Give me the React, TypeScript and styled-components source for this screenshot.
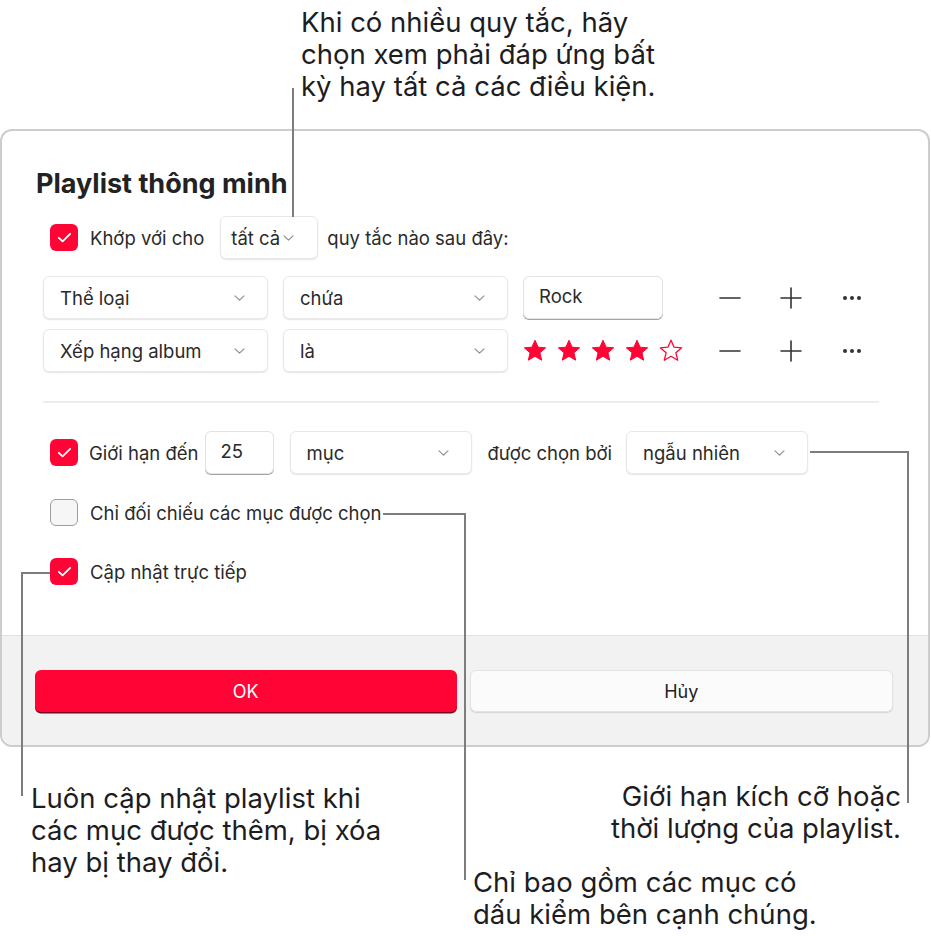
import React from 'react';
import styled, { createGlobalStyle } from 'styled-components';

const GlobalStyle = createGlobalStyle`
  html, body {
    margin: 0;
    padding: 0;
    background: #ffffff;
  }
  * {
    box-sizing: border-box;
  }
`;

const RED = '#ff0435';

const Canvas = styled.div`
  position: relative;
  width: 931px;
  height: 936px;
  overflow: hidden;
  font-family: Inter, "Noto Sans", sans-serif;
  color: #222;
`;

const Dialog = styled.div`
  margin-top: 129px;
  width: 930px;
  border: 2px solid #cdcdcd;
  border-radius: 12px;
  overflow: hidden;
  background: #fff;
`;

const Body = styled.div`
  display: flex;
  flex-direction: column;
  padding: 38px 49px 42px 34px;
`;

const Title = styled.h1`
  margin: 0 0 17px;
  font-size: 27px;
  line-height: 30px;
  font-weight: 700;
  color: #222;
`;

const Row = styled.div<{ $indent?: number; $gap?: number; $mb?: number }>`
  display: flex;
  align-items: center;
  height: 43px;
  margin-left: ${p => p.$indent ?? 0}px;
  margin-bottom: ${p => p.$mb ?? 0}px;
  gap: ${p => p.$gap ?? 0}px;
`;

const Label = styled.span<{ $ml?: number }>`
  font-size: 18.5px;
  color: #2a2a2a;
  margin-left: ${p => p.$ml ?? 0}px;
  white-space: nowrap;
`;

const CheckBox = styled.span<{ $on: boolean }>`
  display: inline-flex;
  align-items: center;
  justify-content: center;
  flex: none;
  width: 28px;
  height: 27px;
  border-radius: 6px;
  background: ${p => (p.$on ? RED : '#f6f6f6')};
  border: ${p => (p.$on ? 'none' : '1.5px solid #9d9d9d')};
`;

const Popup = styled.div<{ $w?: number; $compact?: boolean; $ml?: number }>`
  display: flex;
  align-items: center;
  justify-content: ${p => (p.$compact ? 'flex-start' : 'space-between')};
  gap: 3px;
  width: ${p => (p.$w ? `${p.$w}px` : 'auto')};
  height: 43px;
  margin-left: ${p => p.$ml ?? 0}px;
  padding: ${p => (p.$compact ? '0 10px 0 10px' : '0 22px 0 16px')};
  border-radius: 6px;
  background: #fff;
  border: 1px solid #e8e8e8;
  box-shadow: 0 1px 1.5px rgba(0, 0, 0, 0.1);
  font-size: 18.5px;
  color: #2a2a2a;
  white-space: nowrap;
  flex: none;
`;

const Field = styled.div<{ $w: number; $ml?: number }>`
  display: flex;
  align-items: center;
  width: ${p => p.$w}px;
  height: 43px;
  margin-left: ${p => p.$ml ?? 0}px;
  padding: 0 15px 4px;
  border-radius: 6px;
  background: #fff;
  border: 1px solid #e3e3e3;
  box-shadow: 0 1px 0 #a5a5a5;
  font-size: 18.5px;
  color: #2a2a2a;
  flex: none;
`;

const Stars = styled.div`
  display: flex;
  gap: 10px;
  width: 140px;
  flex: none;

  svg {
    flex: none;
  }
`;

const Tools = styled.div`
  display: flex;
  gap: 21px;
  margin-left: 32px;
`;

const ToolButton = styled.span`
  display: inline-flex;
  align-items: center;
  justify-content: center;
  width: 40px;
  height: 40px;
`;

const Separator = styled.div`
  height: 2px;
  background: #ededed;
  margin: 29px 0 28px 7px;
`;

const Footer = styled.div`
  display: flex;
  gap: 13px;
  padding: 34px 35px 33px 33px;
  background: #f2f2f2;
  border-top: 1px solid #e2e2e2;
`;

const Button = styled.button<{ $primary?: boolean }>`
  flex: 1;
  height: 42px;
  border-radius: 6px;
  font-family: Inter, "Noto Sans", sans-serif;
  font-size: 18px;
  cursor: pointer;
  border: ${p => (p.$primary ? 'none' : '1px solid #e3e3e3')};
  background: ${p => (p.$primary ? RED : '#fbfbfb')};
  color: ${p => (p.$primary ? '#fff' : '#222')};
  box-shadow: ${p => (p.$primary ? '0 1.5px 0 #7a0019' : '0 1px 1px rgba(0,0,0,0.12)')};
`;

const Leaders = styled.svg`
  position: absolute;
  left: 0;
  top: 0;
  pointer-events: none;
`;

const Callout = styled.div<{ $x: number; $y: number; $right?: boolean }>`
  position: absolute;
  ${p => (p.$right ? `right: ${931 - p.$x}px;` : `left: ${p.$x}px;`)}
  top: ${p => p.$y}px;
  font-family: Inter, "Noto Sans", sans-serif;
  font-size: 27.5px;
  line-height: 32px;
  color: #1d1d1f;
  text-align: ${p => (p.$right ? 'right' : 'left')};
  white-space: nowrap;
`;

const Chevron = () => (
  <svg width="11" height="6" viewBox="0 0 11 6">
    <path d="M1 .8l4.5 4.4L10 .8" fill="none" stroke="#8c8c8c" strokeWidth="1.1" strokeLinecap="round" strokeLinejoin="round" />
  </svg>
);

const Check = ({ on }: { on: boolean }) => (
  <CheckBox $on={on}>
    {on && (
      <svg width="15" height="11" viewBox="0 0 15 11">
        <path d="M1.8 5.8l3.8 3.6L13.2 1.8" fill="none" stroke="#fff" strokeWidth="1.8" strokeLinecap="round" strokeLinejoin="round" />
      </svg>
    )}
  </CheckBox>
);

const Star = ({ filled }: { filled: boolean }) => (
  <svg width="24" height="23" viewBox="0 0 24 23">
    <path
      d="M12 1.2l3.1 7 7.6.6-5.8 5 1.8 7.4L12 17.3l-6.7 3.9 1.8-7.4-5.8-5 7.6-.6z"
      fill={filled ? RED : 'none'}
      stroke={RED}
      strokeWidth={filled ? 1 : 1.3}
      strokeLinejoin="round"
    />
  </svg>
);

const Minus = () => (
  <svg width="22" height="22" viewBox="0 0 22 22">
    <path d="M1 11h20" stroke="#333" strokeWidth="1.6" strokeLinecap="round" />
  </svg>
);

const Plus = () => (
  <svg width="22" height="22" viewBox="0 0 22 22">
    <path d="M1 11h20M11 1v20" stroke="#333" strokeWidth="1.6" strokeLinecap="round" />
  </svg>
);

const More = () => (
  <svg width="22" height="6" viewBox="0 0 22 6">
    <circle cx="4" cy="3" r="2" fill="#333" />
    <circle cx="11" cy="3" r="2" fill="#333" />
    <circle cx="18" cy="3" r="2" fill="#333" />
  </svg>
);

const RuleTools = () => (
  <Tools>
    <ToolButton><Minus /></ToolButton>
    <ToolButton><Plus /></ToolButton>
    <ToolButton><More /></ToolButton>
  </Tools>
);

const App: React.FC = () => {
  const rating = 4;

  return (
    <Canvas>
      <GlobalStyle />
      <Dialog>
        <Body>
          <Title>Playlist thông minh</Title>

          <Row $indent={14} $mb={17}>
            <Check on />
            <Label $ml={12}>Khớp với cho</Label>
            <Popup $compact $w={98} $ml={16}>
              tất cả <Chevron />
            </Popup>
            <Label $ml={9}>quy tắc nào sau đây:</Label>
          </Row>

          <Row $indent={7} $mb={10} $gap={15}>
            <Popup $w={225}>Thể loại <Chevron /></Popup>
            <Popup $w={225}>chứa <Chevron /></Popup>
            <Field $w={140}>Rock</Field>
            <RuleTools />
          </Row>

          <Row $indent={7} $gap={15}>
            <Popup $w={225}>Xếp hạng album <Chevron /></Popup>
            <Popup $w={225}>là <Chevron /></Popup>
            <Stars>
              {[1, 2, 3, 4, 5].map(i => (
                <Star key={i} filled={i <= rating} />
              ))}
            </Stars>
            <RuleTools />
          </Row>

          <Separator />

          <Row $indent={14} $mb={17}>
            <Check on />
            <Label $ml={11}>Giới hạn đến</Label>
            <Field $w={69} $ml={6}>25</Field>
            <Popup $w={182} $ml={16}>mục <Chevron /></Popup>
            <Label $ml={16}>được chọn bởi</Label>
            <Popup $w={182} $ml={14}>ngẫu nhiên <Chevron /></Popup>
          </Row>

          <Row $indent={14} $mb={16}>
            <Check on={false} />
            <Label $ml={12}>Chỉ đối chiếu các mục được chọn</Label>
          </Row>

          <Row $indent={14}>
            <Check on />
            <Label $ml={12}>Cập nhật trực tiếp</Label>
          </Row>
        </Body>

        <Footer>
          <Button $primary>OK</Button>
          <Button>Hủy</Button>
        </Footer>
      </Dialog>

      <Leaders width="931" height="936" viewBox="0 0 931 936">
        <g fill="none" stroke="#7d7d7d" strokeWidth="2">
          <path d="M293 88V217" />
          <path d="M810 452H908V803" />
          <path d="M383 514H465V880" />
          <path d="M50 573H22V796" />
        </g>
      </Leaders>

      <Callout $x={301} $y={6}>
        Khi có nhiều quy tắc, hãy
        <br />
        chọn xem phải đáp ứng bất
        <br />
        kỳ hay tất cả các điều kiện.
      </Callout>

      <Callout $x={901} $y={780} $right>
        Giới hạn kích cỡ hoặc
        <br />
        thời lượng của playlist.
      </Callout>

      <Callout $x={31} $y={782}>
        Luôn cập nhật playlist khi
        <br />
        các mục được thêm, bị xóa
        <br />
        hay bị thay đổi.
      </Callout>

      <Callout $x={473} $y={866}>
        Chỉ bao gồm các mục có
        <br />
        dấu kiểm bên cạnh chúng.
      </Callout>
    </Canvas>
  );
};

export default App;
